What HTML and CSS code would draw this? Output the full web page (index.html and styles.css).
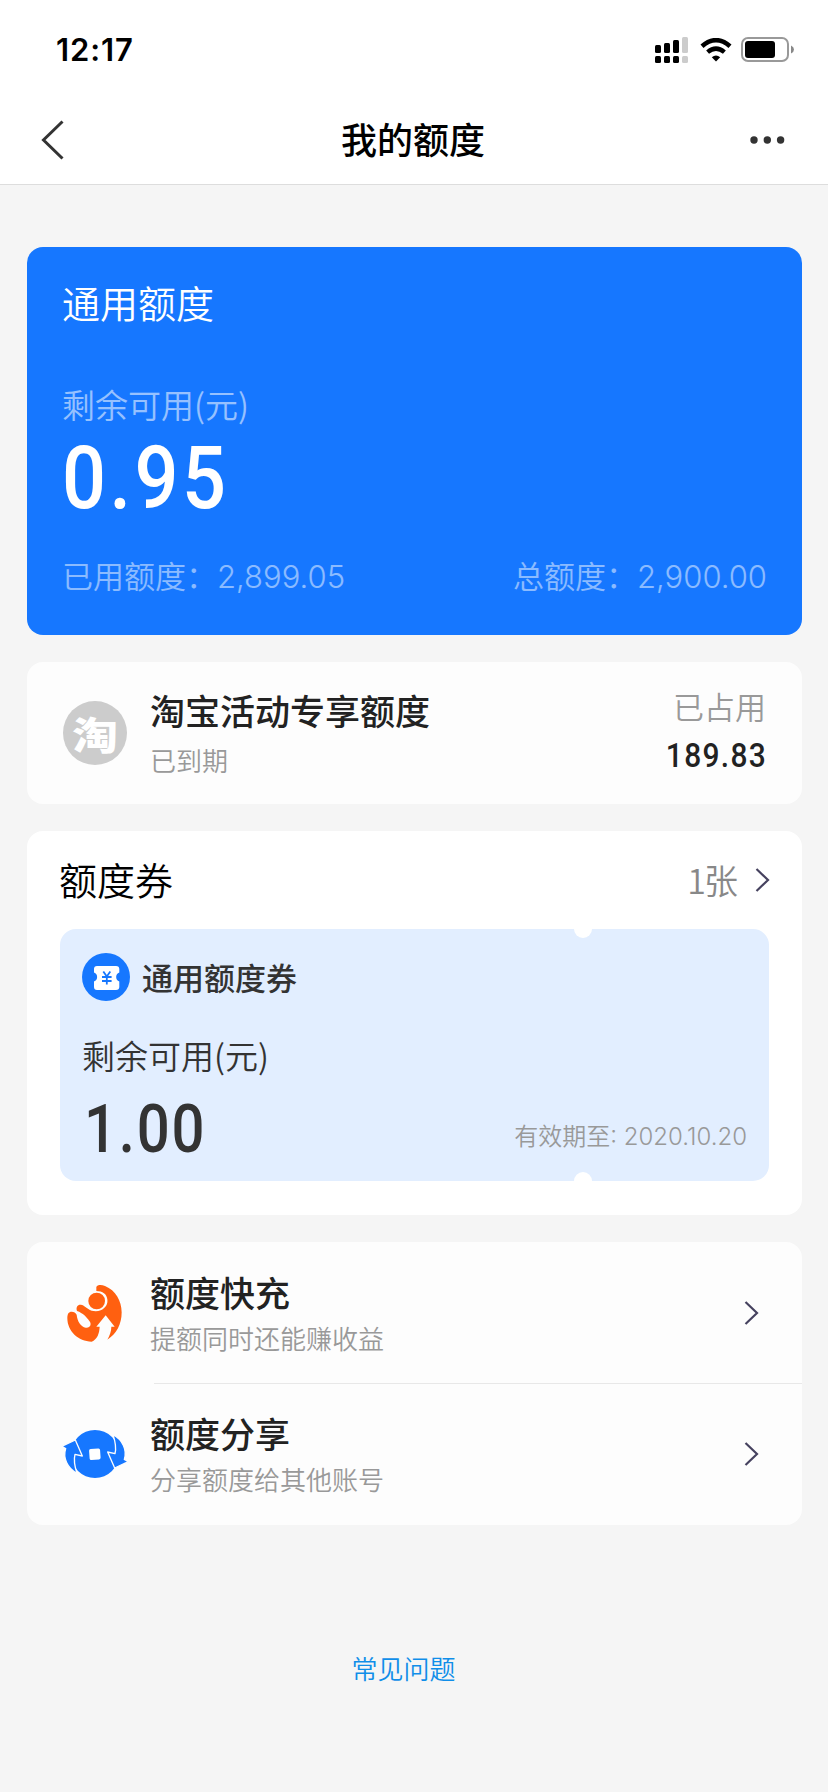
FILE: index.html
```html
<!DOCTYPE html>
<html lang="zh-CN">
<head>
  <meta charset="UTF-8">
  <title>我的额度</title>
  <link rel="stylesheet" href="styles.css">
</head>
<body>

<!-- Header -->
<header class="header">
  <div class="status-bar">
    <span class="time">12:17</span>
    <div class="status-icons">
      <svg class="signal" width="34" height="26" viewBox="0 0 34 26">
        <rect x="0" y="8" width="6" height="8" rx="1.5"/>
        <rect x="9" y="6" width="6" height="10" rx="1.5"/>
        <rect x="18" y="3" width="6" height="13" rx="1.5"/>
        <rect class="off" x="27" y="0" width="6" height="16" rx="1.5"/>
        <rect x="0" y="19" width="6" height="7" rx="1.5"/>
        <rect x="9" y="19" width="6" height="7" rx="1.5"/>
        <rect x="18" y="19" width="6" height="7" rx="1.5"/>
        <rect class="off" x="27" y="19" width="6" height="7" rx="1.5"/>
      </svg>
      <svg class="wifi" width="32" height="24" viewBox="0 0 32 24">
        <path d="M2 8.2Q16 -3.8 30 8.2" fill="none" stroke="#000" stroke-width="4.6"/>
        <path d="M7.6 14.2Q16 7 24.4 14.2" fill="none" stroke="#000" stroke-width="4.4"/>
        <path d="M11.8 19.2Q16 15.6 20.2 19.2L16 23.6Z"/>
      </svg>
      <svg class="battery" width="54" height="26" viewBox="0 0 54 26">
        <rect x="1" y="1" width="46" height="23" rx="6" fill="none" stroke="#999" stroke-width="2"/>
        <rect x="4" y="4" width="30" height="17" rx="3"/>
        <path d="M50 8.5Q53 10 53 12.5T50 16.5Z" fill="#888"/>
      </svg>
    </div>
  </div>
  <nav class="nav-bar">
    <svg width="24" height="40" viewBox="0 0 24 40"><path d="M21.5 1.5L2.5 20L21.5 38.5" fill="none" stroke="#333" stroke-width="3"/></svg>
    <h1>我的额度</h1>
    <svg width="36" height="10" viewBox="0 0 36 10" fill="#333"><circle cx="5" cy="5" r="3.7"/><circle cx="18.3" cy="5" r="3.7"/><circle cx="31.6" cy="5" r="3.7"/></svg>
  </nav>
</header>

<main class="content">
  <!-- General quota -->
  <section class="quota-card">
    <h2>通用额度</h2>
    <p class="quota-label">剩余可用(元)</p>
    <p class="quota-amount">0.95</p>
    <div class="quota-detail">
      <span>已用额度：<b>2,899.05</b></span>
      <span>总额度：<b>2,900.00</b></span>
    </div>
  </section>

  <!-- Taobao quota -->
  <section class="card row tao-row">
    <div class="row-icon tao"><span>淘</span></div>
    <div class="row-text">
      <h3>淘宝活动专享额度</h3>
      <p>已到期</p>
    </div>
    <div class="used">
      <p class="used-label">已占用</p>
      <p class="used-amount">189.83</p>
    </div>
  </section>

  <!-- Coupons -->
  <section class="card coupons">
    <div class="coupons-head">
      <h2>额度券</h2>
      <span class="count">1张</span>
      <svg class="arrow" width="15" height="26" viewBox="0 0 15 26"><path d="M1.5 2L13 13L1.5 24"/></svg>
    </div>
    <div class="coupon">
      <div class="coupon-title">
        <svg width="48" height="48" viewBox="0 0 48 48">
          <circle cx="24" cy="24" r="24" fill="#1677ff"/>
          <path d="M15 13H34Q37.300 13 37.300 16V19.500A4.800 4.800 0 0 0 37.300 28.500V34Q37.300 37 34 37H15Q12 37 12 34V28.500A4.800 4.800 0 0 0 12 19.500V16Q12 13 15 13Z" fill="#fff"/>
          <path d="M21.300 18.500L24.800 23.500L28.300 18.500M20 24H29.600M20 28H29.600M24.800 23.500V31.500" fill="none" stroke="#1677ff" stroke-width="1.800"/>
        </svg>
        <h3>通用额度券</h3>
      </div>
      <p class="coupon-label">剩余可用(元)</p>
      <div class="coupon-bottom">
        <span class="coupon-amount">1.00</span>
        <span class="coupon-date">有效期至: 2020.10.20</span>
      </div>
    </div>
  </section>

  <!-- Services -->
  <section class="card">
    <div class="row link-row">
      <svg class="row-icon" viewBox="0 0 192 192" fill="#ff6010">
        <circle cx="101" cy="60" r="25"/>
        <path d="M100 18C104 10 116 11 126 15C158 28 176 60 176 94C176 130 160 160 133 176C140 164 145 151 145 137H155L128 103L100 137H110C109 158 103 174 86 182C46 182 13 150 13 112C13 98 17 92 26 92C33 92 38 95 41 101C43 122 54 137 68 140C82 142 87 129 79 120C71 109 60 96 42 90C38 78 44 70 54 71C62 72 68 79 76 84C85 91 101 93 113 88C128 82 135 69 133 55C131 39 119 30 100 30Z"/>
      </svg>
      <div class="row-text">
        <h3>额度快充</h3>
        <p>提额同时还能赚收益</p>
      </div>
      <svg class="arrow" width="15" height="26" viewBox="0 0 15 26"><path d="M1.500 2L13 13L1.500 24"/></svg>
    </div>
    <div class="row link-row">
      <svg class="row-icon" viewBox="0 0 192 192" fill="#1677ff">
        <circle cx="96" cy="96" r="72"/>
        <g stroke="#fdfdfd" stroke-width="4" stroke-linejoin="round">
          <path d="M-4 73L37 54L58 102L36 97C32 112 34 130 42 154C13 139 -1 108 8 80Z"/>
          <path d="M196 119L155 138L134 90L156 95C160 80 158 62 150 38C179 53 193 84 184 112Z"/>
        </g>
        <rect x="79" y="80" width="33" height="33" rx="5" fill="#fff" transform="rotate(-4 96 96)"/>
      </svg>
      <div class="row-text">
        <h3>额度分享</h3>
        <p>分享额度给其他账号</p>
      </div>
      <svg class="arrow" width="15" height="26" viewBox="0 0 15 26"><path d="M1.500 2L13 13L1.500 24"/></svg>
    </div>
  </section>

  <a class="faq">常见问题</a>
</main>

</body>
</html>
```
FILE: styles.css
```css
* {
  box-sizing: border-box;
}
body {
  margin: 0;
  min-height: 1792px;
  font-family: 'Noto Sans CJK SC', sans-serif;
  font-weight: 350;
  background: #f5f5f5;
  color: #222;
}
h1, h2, h3, p {
  margin: 0;
}
svg {
  flex-shrink: 0;
}

/* Header */
.header {
  background: #fff;
  border-bottom: 1px solid #ddd;
}
.status-bar {
  height: 96px;
  padding: 4px 33px 0 56px;
  display: flex;
  justify-content: space-between;
  align-items: center;
}
.time {
  font-family: Inter, sans-serif;
  font-size: 31px;
  line-height: 40px;
  font-weight: 600;
  letter-spacing: 0.9px;
  color: #000;
}
.status-icons {
  display: flex;
  align-items: center;
  gap: 11px;
}
.signal .off {
  fill: #ccc;
}
.wifi {
  margin-right: -2px;
}
.nav-bar {
  height: 88px;
  padding: 0 43px 0 41px;
  display: flex;
  justify-content: space-between;
  align-items: center;
}
.nav-bar h1 {
  font-size: 36px;
  line-height: 50px;
  font-weight: 500;
  color: #000;
  padding: 0 0 4px 12px;
}

.content {
  padding: 62px 26px 0 27px;
  display: flex;
  flex-direction: column;
  gap: 27px;
}

/* General quota */
.quota-card {
  height: 388px;
  padding: 30px 35px 0;
  border-radius: 16px;
  background: #1677ff;
  color: #fff;
}
.quota-card h2 {
  font-size: 38px;
  line-height: 50px;
  font-weight: 350;
}
.quota-label {
  margin-top: 54px;
  font-size: 33px;
  line-height: 46px;
  opacity: 0.55;
}
.quota-amount {
  margin-top: 7px;
  font-family: Roboto, sans-serif;
  font-size: 88px;
  line-height: 88px;
  font-weight: 500;
  letter-spacing: 4px;
  transform: scaleX(0.88);
  transform-origin: left;
}
.quota-detail {
  margin-top: 31px;
  display: flex;
  justify-content: space-between;
  font-size: 31px;
  line-height: 44px;
  opacity: 0.5;
}
.quota-detail b {
  font-family: Inter, sans-serif;
  font-weight: 300;
}

/* White cards */
.card {
  border-radius: 16px;
  background: #fdfdfd;
}
.row {
  height: 142px;
  padding: 0 36px;
  display: flex;
  align-items: center;
}
.row-icon {
  width: 64px;
  height: 64px;
  margin-right: 23px;
  overflow: visible;
}
.tao {
  border-radius: 50%;
  background: #ccc;
  color: #fff;
  display: flex;
  align-items: center;
  justify-content: center;
}
.tao span {
  font-size: 40px;
  line-height: 60px;
  font-weight: 900;
  transform: scale(1.14, 0.94);
}
.row-text {
  flex: 1;
}
.row-text h3 {
  font-size: 35px;
  line-height: 50px;
  font-weight: 500;
}
.row-text p {
  font-size: 26px;
  line-height: 42px;
  color: #999;
}
.tao-row .row-text p {
  padding-top: 4px;
}
.used {
  text-align: right;
  padding-bottom: 5px;
}
.used-label {
  font-size: 31px;
  line-height: 48px;
  color: #999;
}
.used-amount {
  font-family: Roboto, sans-serif;
  font-size: 34px;
  line-height: 50px;
  font-weight: 500;
  letter-spacing: 1.5px;
  margin-right: -1px;
  transform: scaleX(0.88);
  transform-origin: right;
}
.arrow {
  fill: none;
  stroke: #46425f;
  stroke-width: 2.2;
}

/* Coupons */
.coupons {
  height: 384px;
  padding: 24px 33px 0;
  background: #fff;
}
.coupons-head {
  height: 50px;
  margin-right: -1px;
  display: flex;
  align-items: center;
}
.coupons-head h2 {
  flex: 1;
  font-size: 38px;
  line-height: 50px;
  font-weight: 350;
  color: #000;
  margin-left: -1px;
  padding-bottom: 3px;
}
.count {
  font-size: 34px;
  line-height: 50px;
  letter-spacing: -2px;
  color: #888;
  margin-right: 19px;
}
.coupon {
  position: relative;
  height: 252px;
  margin-top: 24px;
  padding: 24px 22px 0;
  border-radius: 16px;
  background: #e2eeff;
  color: #333;
  overflow: hidden;
}
/* ticket notches */
.coupon::before, .coupon::after {
  content: "";
  position: absolute;
  left: 514px;
  width: 18px;
  height: 18px;
  border-radius: 50%;
  background: #fff;
}
.coupon::before {
  top: -9px;
}
.coupon::after {
  bottom: -9px;
}
.coupon-title {
  display: flex;
  align-items: center;
  gap: 12px;
}
.coupon-title h3 {
  font-size: 31px;
  line-height: 48px;
  font-weight: 500;
}
.coupon-label {
  margin-top: 31px;
  font-size: 33px;
  line-height: 46px;
}
.coupon-bottom {
  margin-top: 19px;
  display: flex;
  justify-content: space-between;
  align-items: center;
}
.coupon-amount {
  margin-left: 2px;
  font-family: Roboto, sans-serif;
  font-size: 66px;
  line-height: 66px;
  font-weight: 500;
  letter-spacing: 2px;
  transform: scaleX(0.88);
  transform-origin: left;
}
.coupon-date {
  padding-top: 14px;
  font-family: Inter, 'Noto Sans CJK SC', sans-serif;
  font-size: 24px;
  line-height: 34px;
  color: #999;
}

/* Services */
.link-row {
  height: 141px;
  padding-right: 43px;
}
.link-row + .link-row {
  height: 142px;
  background: linear-gradient(#e8e8e8, #e8e8e8) 127px 0 / 100% 1px no-repeat;
}

.faq {
  margin-top: 97px;
  padding-right: 22px;
  text-align: center;
  font-size: 26px;
  line-height: 38px;
  color: #108ee9;
}
```
